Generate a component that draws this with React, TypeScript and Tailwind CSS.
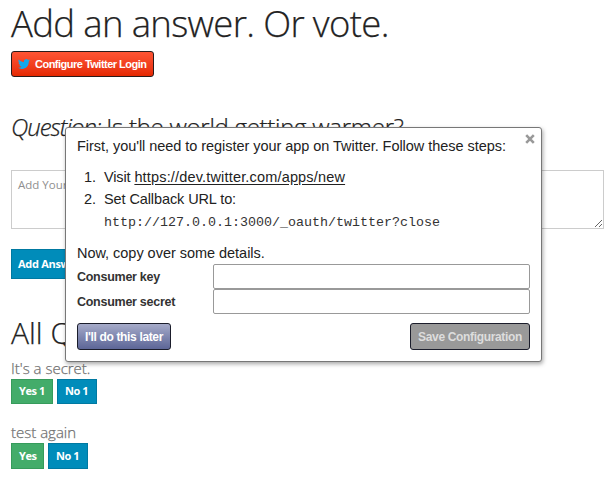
import type { ReactNode } from "react";

const openSans = "font-['Open_Sans',sans-serif]";
const helvetica = "font-['Liberation_Sans',Arial,sans-serif]";

function TwitterBird() {
  return (
    <svg viewBox="0 0 24 24" className="h-[12px] w-[12px] shrink-0 fill-[#13a8ed]" aria-hidden="true">
      <path d="M23.95 4.57a10 10 0 0 1-2.82.77 4.96 4.96 0 0 0 2.16-2.72c-.95.55-2 .95-3.13 1.18a4.92 4.92 0 0 0-8.38 4.48C7.69 8.1 4.07 6.13 1.64 3.16a4.93 4.93 0 0 0 1.52 6.57 4.9 4.9 0 0 1-2.23-.61v.06a4.92 4.92 0 0 0 3.95 4.83 5 5 0 0 1-2.21.08 4.94 4.94 0 0 0 4.6 3.42A9.87 9.87 0 0 1 0 19.54a13.99 13.99 0 0 0 7.55 2.21c9.05 0 14-7.5 14-13.98 0-.21 0-.42-.02-.63a9.94 9.94 0 0 0 2.46-2.55z" />
    </svg>
  );
}

function VoteButton({ className, children }: { className: string; children: ReactNode }) {
  return (
    <button className={`border pl-[7px] text-left text-[11px] font-bold tracking-[-0.45px] whitespace-nowrap text-white ${openSans} ${className}`}>
      {children}
    </button>
  );
}

function ConfigDialog() {
  return (
    <div className={`absolute top-[127px] left-[65px] h-[235px] w-[477px] rounded-[3px] border border-[#777] bg-white px-[11px] text-[14.5px] text-[#222] shadow-[1px_2px_4px_rgba(0,0,0,0.35)] ${helvetica}`}>
      <button className="absolute top-[3px] right-[6px] h-4 w-[10px] text-[#999]" aria-label="Close">
        <svg viewBox="0 0 10 16" className="h-4 w-[10px] fill-none stroke-current stroke-[2.6]">
          <path d="M1.2 4.2 8.8 11.8M8.8 4.2 1.2 11.8" />
        </svg>
      </button>
      <p className="mt-[7px] h-[31px] leading-[22px] tracking-[-0.045px] whitespace-nowrap">
        First, you'll need to register your app on Twitter. Follow these steps:
      </p>
      <ol className="h-[76px] whitespace-nowrap">
        <li className="flex h-[22px] leading-[22px]">
          <span className="w-[27px] pl-[7px]">1.</span>
          <span className="tracking-[-0.13px]">Visit <a className="tracking-[0.17px] underline underline-offset-2">https://dev.twitter.com/apps/new</a></span>
        </li>
        <li className="flex h-[22px] leading-[22px]">
          <span className="w-[27px] pl-[7px]">2.</span>
          <span className="tracking-[-0.1px]">Set Callback URL to:</span>
        </li>
        <li className="pl-[27px] font-['Liberation_Mono',monospace] text-[13.33px] leading-[25px] text-[#333]">
          http://127.0.0.1:3000/_oauth/twitter?close
        </li>
      </ol>
      <p className="h-[22px] leading-[22px] tracking-[-0.03px]">Now, copy over some details.</p>
      <div className="flex h-[25px]">
        <label className="w-[136px] pt-px text-[12.5px] leading-[25px] font-bold tracking-[-0.27px] text-[#333]">Consumer key</label>
        <input className="h-[25px] w-[317px] rounded-[2px] border border-[#999]" />
      </div>
      <div className="flex h-[25px]">
        <label className="w-[136px] pt-px text-[12.5px] leading-[25px] font-bold tracking-[-0.27px] text-[#333]">Consumer secret</label>
        <input className="h-[25px] w-[317px] rounded-[2px] border border-[#999]" />
      </div>
      <div className="mt-[9px] flex justify-between text-[12px] font-bold tracking-[-0.34px] whitespace-nowrap">
        <button className="h-[27px] w-[94px] rounded-[3px] border border-[#1b1d2b] bg-linear-to-b from-[#a6abc9] to-[#5d6697] text-white">
          I'll do this later
        </button>
        <button className="h-[27px] w-[120px] rounded-[3px] border border-[#1b1d2b] bg-[#999] text-[#ddd]">
          Save Configuration
        </button>
      </div>
    </div>
  );
}

export default function App() {
  return (
    <div className={`relative h-[486px] w-[610px] bg-white pl-[11px] ${openSans}`}>
      <h1 className="h-[51px] pt-px text-[36.5px] leading-[44px] font-light tracking-[-0.65px] whitespace-nowrap text-[#222] [-webkit-text-stroke:0.25px_#222]">
        Add an answer. Or vote.
      </h1>
      <button className={`flex h-[26px] w-[143px] items-center gap-[5px] rounded-[3px] border border-[#2b1b1b] bg-linear-to-b from-[#ff5433] to-[#e52800] pl-[6px] text-[11px] font-bold tracking-[-0.51px] whitespace-nowrap text-white ${helvetica}`}>
        <TwitterBird />
        Configure Twitter Login
      </button>
      <h3 className="mt-[34px] h-[59px] text-[24px] leading-[32px] font-light tracking-[-0.28px] whitespace-nowrap text-[#222] [-webkit-text-stroke:0.25px_#222]">
        <em className="tracking-[-1px]">Question:</em> Is the world getting warmer?
      </h3>
      <textarea
        className="block h-[59px] w-[593px] resize border border-[#ccc] px-[6px] py-[6px] text-[11.5px] leading-[16px] placeholder:text-[#8f8f8f]"
        placeholder="Add Your Answer"
      />
      <VoteButton className="mt-[20px] block h-[30px] w-[95px] border-[#0079a1] bg-[#008cba] pl-[6px]! tracking-[-0.3px]!">Add Answer</VoteButton>
      <h2 className="mt-[32px] h-[48px] text-[30px] leading-[44px] font-light whitespace-nowrap text-[#222] [-webkit-text-stroke:0.25px_#222]">All Questions</h2>
      <p className="h-[20px] text-[15px] leading-[19px] font-light text-[#6f6f6f] [-webkit-text-stroke:0.25px_#6f6f6f]">It's a secret.</p>
      <div className="flex gap-1">
        <VoteButton className="h-[25px] w-[42px] border-[#369b5b] bg-[#43ac6a]">Yes 1</VoteButton>
        <VoteButton className="h-[25px] w-[40px] border-[#0079a1] bg-[#008cba]">No 1</VoteButton>
      </div>
      <p className="mt-[19px] h-[20px] text-[15px] leading-[19px] font-light text-[#6f6f6f] [-webkit-text-stroke:0.25px_#6f6f6f]">test again</p>
      <div className="flex gap-1">
        <VoteButton className="h-[26px] w-[33px] border-[#369b5b] bg-[#43ac6a]">Yes</VoteButton>
        <VoteButton className="h-[26px] w-[40px] border-[#0079a1] bg-[#008cba]">No 1</VoteButton>
      </div>
      <ConfigDialog />
    </div>
  );
}
